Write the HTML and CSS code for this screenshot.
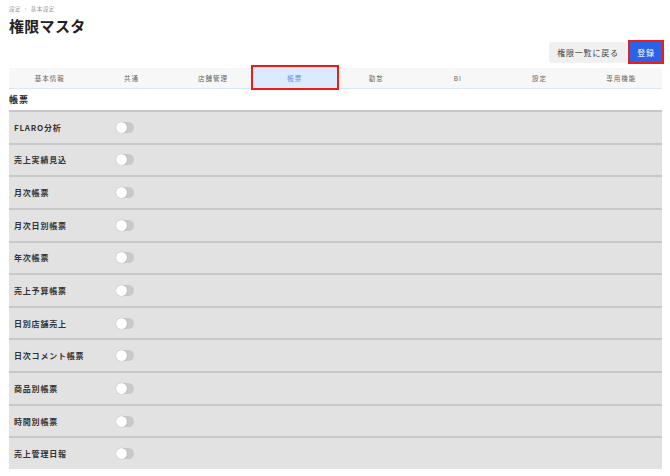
FILE: index.html
```html
<!DOCTYPE html>
<html lang="ja">
<head>
    <meta charset="UTF-8">
    <title>権限マスタ</title>
    <link rel="stylesheet" href="styles.css">
</head>
<body>
    <div class="page">
        <div class="breadcrumb">設定 <span class="sep">›</span> 基本設定</div>
        <h1 class="page-title">権限マスタ</h1>

        <div class="actions">
            <button class="btn btn-back">権限一覧に戻る</button>
            <button class="btn btn-save">登録</button>
        </div>

        <!-- tabs -->
        <div class="tabs">
            <div class="tab">基本情報</div>
            <div class="tab">共通</div>
            <div class="tab">店舗管理</div>
            <div class="tab active">帳票</div>
            <div class="tab">勤怠</div>
            <div class="tab">BI</div>
            <div class="tab">設定</div>
            <div class="tab">専用機能</div>
        </div>

        <div class="section-title">帳票</div>

        <div class="perm-list">
            <div class="perm-row"><div class="perm-label">FLARO分析</div><span class="toggle"></span></div>
            <div class="perm-row"><div class="perm-label">売上実績見込</div><span class="toggle"></span></div>
            <div class="perm-row"><div class="perm-label">月次帳票</div><span class="toggle"></span></div>
            <div class="perm-row"><div class="perm-label">月次日別帳票</div><span class="toggle"></span></div>
            <div class="perm-row"><div class="perm-label">年次帳票</div><span class="toggle"></span></div>
            <div class="perm-row"><div class="perm-label">売上予算帳票</div><span class="toggle"></span></div>
            <div class="perm-row"><div class="perm-label">日別店舗売上</div><span class="toggle"></span></div>
            <div class="perm-row"><div class="perm-label">日次コメント帳票</div><span class="toggle"></span></div>
            <div class="perm-row"><div class="perm-label">商品別帳票</div><span class="toggle"></span></div>
            <div class="perm-row"><div class="perm-label">時間別帳票</div><span class="toggle"></span></div>
            <div class="perm-row"><div class="perm-label">売上管理日報</div><span class="toggle"></span></div>
        </div>
    </div>
</body>
</html>
```

FILE: styles.css
```css
/* Base */
body {
    margin: 0;
    background: #fff;
    font-family: "Noto Sans CJK JP", "Noto Sans", sans-serif;
    color: #333;
}

.page {
    padding: 5px 8px 0 9px;
}

.breadcrumb {
    font-size: 5.5px;
    color: #999;
    line-height: 8px;
    letter-spacing: 0.5px;
}

.breadcrumb .sep {
    margin: 0 2px;
}

.page-title {
    margin: 2px 0 0;
    font-size: 15px;
    line-height: 22px;
    font-weight: bold;
    letter-spacing: 0.3px;
    color: #222;
}

/* Buttons */
.actions {
    display: flex;
    justify-content: flex-end;
    align-items: center;
    gap: 3px;
    margin-top: 3px;
    height: 24px;
}

.btn {
    border: none;
    font-family: inherit;
    font-size: 8px;
    letter-spacing: 0.8px;
    height: 20px;
    border-radius: 3px;
    white-space: nowrap;
    padding: 0;
    cursor: pointer;
}

.btn-back {
    background: #f0f0f0;
    color: #444;
    width: 78px;
    box-shadow: 0 1px 1px rgba(0, 0, 0, 0.06);
}

.btn-save {
    background: #2b63e8;
    color: #fff;
    width: 32px;
    border-radius: 0;
    outline: 2px solid #f01c12;
}

/* Tabs */
.tabs {
    display: grid;
    grid-template-columns: repeat(8, 1fr);
    background: #f7f7f7;
    border-bottom: 1px solid #dce7f5;
    margin-top: 4px;
    height: 20px;
}

.tab {
    display: flex;
    align-items: center;
    justify-content: center;
    font-size: 6.5px;
    letter-spacing: 1px;
    color: #666;
}

.tab.active {
    background: #dbeafe;
    color: #5b8be6;
    outline: 2px solid #f01c12;
    position: relative;
    margin: -1px -1px 0 -1px;
}

.section-title {
    font-size: 9px;
    font-weight: bold;
    letter-spacing: 1px;
    line-height: 14px;
    padding-top: 4px;
    height: 17px;
    color: #222;
}

/* Permission rows */
.perm-list {
    background: #e2e2e2;
}

.perm-row {
    display: flex;
    align-items: center;
    box-sizing: border-box;
    height: 32.65px;
    border-top: 2px solid #c8c8c8;
    padding-left: 5px;
}

.perm-label {
    width: 102px;
    font-size: 8px;
    font-weight: bold;
    letter-spacing: 0.8px;
    color: #333;
}

.toggle {
    display: inline-block;
    position: relative;
    width: 18px;
    height: 11px;
    border-radius: 6px;
    background: #c9c9c9;
}

.toggle::after {
    content: "";
    position: absolute;
    left: 0;
    top: 0;
    width: 11px;
    height: 11px;
    border-radius: 50%;
    background: #fff;
    box-shadow: 0 0 1px rgba(0, 0, 0, 0.3);
}
```
